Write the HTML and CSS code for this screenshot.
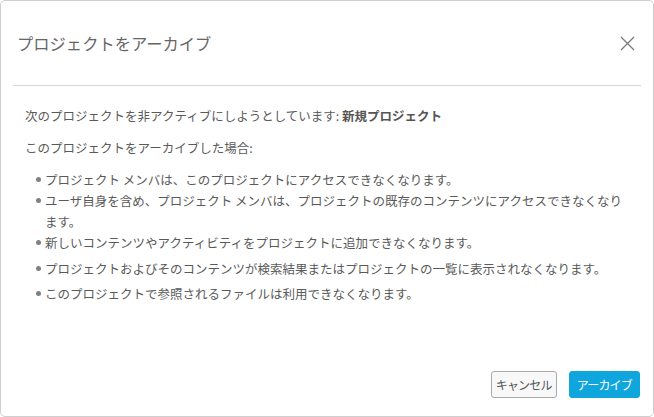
FILE: index.html
```html
<!DOCTYPE html>
<html lang="ja">
<head>
    <meta charset="UTF-8">
    <meta name="viewport" content="width=device-width, initial-scale=1.0">
    <title>プロジェクトをアーカイブ</title>
    <link rel="stylesheet" href="styles.css">
</head>
<body>
    <div class="dialog">
        <div class="dialog-header">
            <h2 class="dialog-title">プロジェクトをアーカイブ</h2>
            <button class="close-btn" aria-label="閉じる">
                <svg width="15" height="15" viewBox="0 0 15 15">
                    <path d="M1 1 L14 14 M14 1 L1 14" stroke="#7a7a7a" stroke-width="1.3" fill="none"/>
                </svg>
            </button>
        </div>

        <div class="dialog-body">
            <p class="lead">次のプロジェクトを非アクティブにしようとしています: <strong>新規プロジェクト</strong></p>
            <p class="lead second">このプロジェクトをアーカイブした場合:</p>
            <ul class="effects">
                <li>プロジェクト メンバは、このプロジェクトにアクセスできなくなります。</li>
                <li>ユーザ自身を含め、プロジェクト メンバは、プロジェクトの既存のコンテンツにアクセスできなくなります。</li>
                <li>新しいコンテンツやアクティビティをプロジェクトに追加できなくなります。</li>
                <li>プロジェクトおよびそのコンテンツが検索結果またはプロジェクトの一覧に表示されなくなります。</li>
                <li>このプロジェクトで参照されるファイルは利用できなくなります。</li>
            </ul>
        </div>

        <div class="dialog-footer">
            <button class="btn btn-cancel">キャンセル</button>
            <button class="btn btn-primary">アーカイブ</button>
        </div>
    </div>
</body>
</html>
```
FILE: styles.css
```css
* {
    box-sizing: border-box;
}
body {
    margin: 0;
    font-family: "Noto Sans CJK JP", "Noto Sans", sans-serif;
    color: #5a5a5a;
    background: #fff;
}
.dialog {
    width: 654px;
    height: 417px;
    border: 1px solid #cfcfcf;
    border-radius: 5px;
    display: flex;
    flex-direction: column;
}
.dialog-header {
    height: 85px;
    margin: 0 12px;
    padding: 0 6px 0 4px;
    border-bottom: 1px solid #d6d6d6;
    display: flex;
    align-items: center;
    justify-content: space-between;
}
.dialog-title {
    margin: 0;
    font-size: 16.3px;
    font-weight: normal;
    color: #666;
}
.close-btn {
    border: none;
    background: none;
    padding: 0;
    width: 15px;
    height: 15px;
    cursor: pointer;
}
.dialog-body {
    flex: 1;
    padding: 20px 24px 0 24px;
    font-size: 12.5px;
}
.lead {
    margin: 0;
    line-height: 20px;
}
.lead strong {
    color: #555;
}
.lead.second {
    margin-top: 12px;
}
.effects {
    list-style: none;
    margin: 11px 0 0 0;
    padding: 0 0 0 20px;
}
.effects li {
    position: relative;
    line-height: 21px;
}
.effects li:nth-child(4) {
    margin-top: 5px;
}
.effects li:nth-child(5) {
    margin-top: 4px;
}
/* titik bullet */
.effects li::before {
    content: "";
    position: absolute;
    left: -9px;
    top: 8px;
    width: 5px;
    height: 5px;
    border-radius: 50%;
    background: #808080;
}
.dialog-footer {
    display: flex;
    justify-content: flex-end;
    gap: 12px;
    padding: 0 13px 18px 0;
}
.btn {
    height: 27px;
    padding: 0 4px;
    font-family: inherit;
    font-size: 12px;
    letter-spacing: -0.8px;
    border-radius: 3px;
    cursor: pointer;
}
.btn-cancel {
    background: #f8f8f8;
    border: 1px solid #a9a9a9;
    color: #555;
}
.btn-primary {
    background: #0fa5dd;
    border: 1px solid #0fa5dd;
    color: #fff;
    padding: 0 7px;
}
```
